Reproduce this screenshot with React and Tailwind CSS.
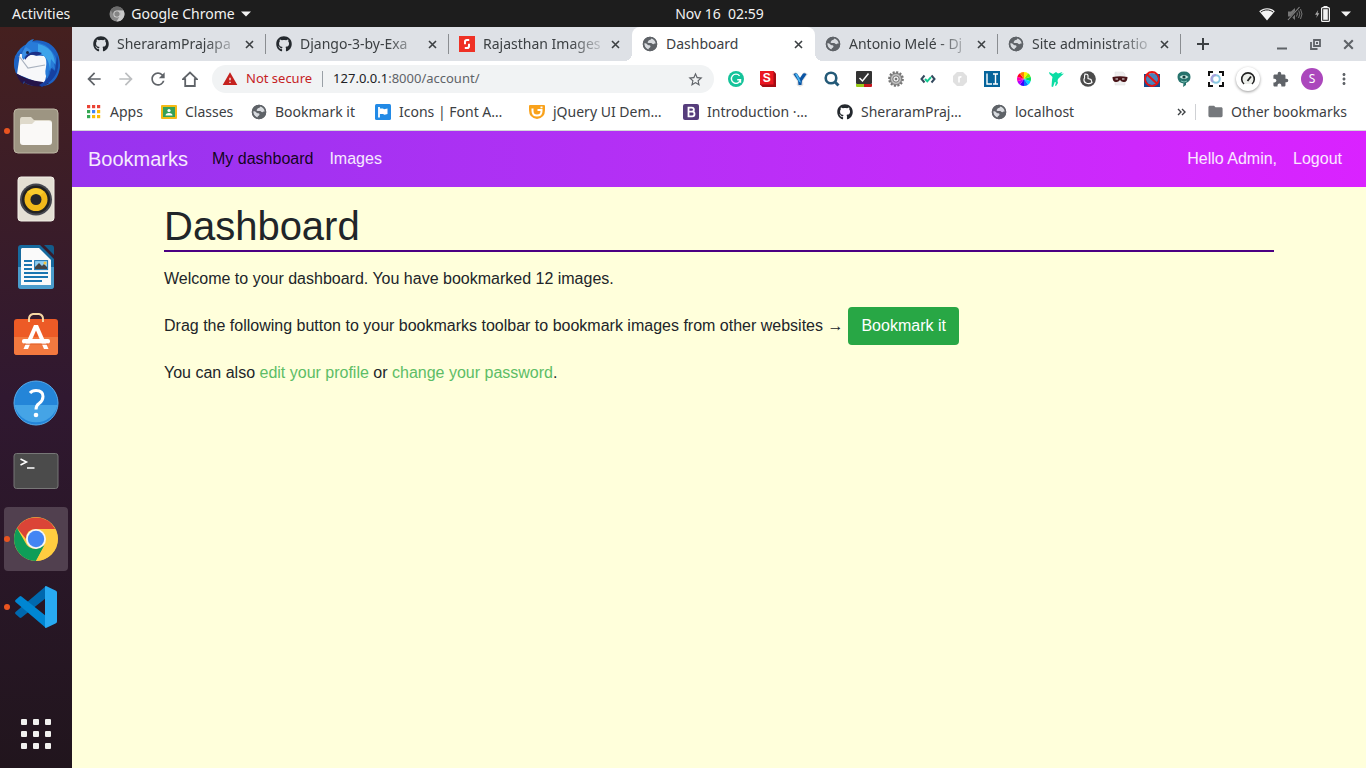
import React from "react";
import { FaGithub } from "react-icons/fa";
import { MdArrowBack, MdArrowForward, MdRefresh, MdStarBorder, MdExtension, MdMoreVert, MdFolder, MdWarning } from "react-icons/md";

const ui = "font-['Noto_Sans',sans-serif]";

function Svg({ s = 16, vb = "0 0 16 16", children, className = "" }) {
  return (
    <svg width={s} height={s} viewBox={vb} className={"shrink-0 " + className} aria-hidden="true">
      {children}
    </svg>
  );
}

const Github = () => <FaGithub size={16} className="shrink-0 text-[#24292e]" aria-hidden="true" />;

const Globe = () => (
  <Svg>
    <circle cx="8" cy="8" r="7.2" fill="#5f6368" />
    <path d="M9.2 1.8c.4 1.2-.4 2-1.6 2.2-1 .2-1 .9-1.6 1.4-.7.6-.5 1.5.6 1.5h2.5c1 0 1.2 1.3 2.3 1.3.6 0 .9-.7 1.7-.7h1.2C14 5 12.200 2.600 9.200 1.800z" fill="#dee1e6" opacity=".95" />
    <path d="M1.900 7.200c.2 3 1.600 5.200 4.700 6.600l.2-1.500c.8-.3 1.700-1 1.700-2 0-.8-.8-1.100-1.700-1.100C5.600 9.200 4.700 7.200 3.300 7.200z" fill="#dee1e6" opacity=".95" />
    <circle cx="8" cy="8" r="6.500" fill="none" stroke="#5f6368" strokeWidth="1.600" />
  </Svg>
);

const Shutter = () => (
  <Svg>
    <rect width="16" height="16" fill="#ef3125" />
    <path d="M5 8.200V5.800A2.800 2.800 0 0 1 7.800 3h2.400v2H8a1 1 0 0 0-1 1v2.200zM11 7.800v2.400A2.800 2.800 0 0 1 8.200 13H5.800v-2H8a1 1 0 0 0 1-1V7.800z" fill="#fff" />
  </Svg>
);

const Cross = ({ s = 9, w = 1.6, color = "#3c4043" }) => (
  <Svg s={s} vb="0 0 9 9">
    <path d="M1 1l7 7M8 1l-7 7" stroke={color} strokeWidth={w} />
  </Svg>
);

const Caret = ({ className = "" }) => (
  <svg width="10" height="6" viewBox="0 0 10 6" className={"shrink-0 " + className} aria-hidden="true">
    <path d="M0 .5h10L5 5.500z" fill="#f2f2f2" />
  </svg>
);

function TopBar() {
  return (
    <header className={"flex h-[27px] shrink-0 items-center justify-between bg-[#1d1d1d] px-3 text-sm text-[#f2f2f2] " + ui}>
      <div className="flex flex-1 items-center gap-[39px]">
        <button type="button">Activities</button>
        <button type="button" className="flex items-center gap-[6px] whitespace-nowrap">
          <Svg s={16}>
            <circle cx="8" cy="8" r="7.500" fill="#8a8a8a" />
            <path d="M1.600 4A7.500 7.500 0 0 1 14.500 4.400H8A3.600 3.600 0 0 0 4.800 9.600z" fill="#6b6b6b" />
            <path d="M14.500 4.400A7.500 7.500 0 0 1 7.500 15.500l3.700-5.900A3.600 3.600 0 0 0 8 4.400z" fill="#c9c9c9" />
            <circle cx="8" cy="8" r="3.600" fill="#d8d8d8" />
            <circle cx="8" cy="8" r="2.700" fill="#858585" />
          </Svg>
          Google Chrome
          <Caret />
        </button>
      </div>
      <time className="ml-[76px] whitespace-pre">Nov 16  02:59</time>
      <div className="flex flex-1 items-center justify-end gap-3 pr-[3px]">
        <Svg s={16}>
          <path d="M8 14.500L.2 5.200C4.700 1.200 11.300 1.200 15.800 5.200z" fill="#f2f2f2" />
          <path d="M1.800 6.100C5.500 3.200 10.500 3.200 14.200 6.100" fill="none" stroke="#1d1d1d" strokeWidth="1" />
        </Svg>
        <Svg s={16}>
          <path d="M1 5.500h3L8 2v12l-4-3.500H1z" fill="#777" />
          <path d="M9.500 5.500q1.800 2.500 0 5M11.500 4q2.800 4 0 8M13.500 3q3 5 0 10" fill="none" stroke="#777" />
          <path d="M1.500 14.500L13 1" stroke="#1d1d1d" strokeWidth="2.200" />
          <path d="M1 14L12.500 1" stroke="#888" strokeWidth="1.100" />
        </Svg>
        <Svg s={16}>
          <path d="M3.200 4L0 8.800h2L1.300 12l3-4.700H2.500z" fill="#aaa" />
          <path d="M8.500 0h4v1.500h-4z" fill="#f2f2f2" />
          <rect x="6.600" y="1.600" width="7.800" height="13.800" rx="1" fill="none" stroke="#f2f2f2" strokeWidth="1.200" />
          <rect x="8.200" y="3.200" width="4.600" height="10.600" fill="#f2f2f2" />
        </Svg>
        <Caret className="-ml-[2px]" />
      </div>
    </header>
  );
}

const dockApps = [
  {
    name: "Thunderbird",
    art: (
      <>
        <circle cx="24" cy="25" r="22" fill="#1f6fd0" />
        <path d="M3 17C1 27 4 38 12 45c0-3 0-5 1-7l24 6c-3 2-6 3-9 3C41 48 48 37 48 26 48 14 42 6 34 3 28 1 21 0 18 4c-4 1-7 4-8 8z" fill="#1d62c4" />
        <path d="M8 15l24 2q6 1 5 8l-5 21L5 35z" fill="#f7f8fa" />
        <path d="M7 17l9 12 17-3" fill="none" stroke="#a9b2bf" strokeWidth="1.200" />
        <path d="M4 34q10 7 27 9l1 4q-9 2-19-3l-1-2-1 3q-5-4-7-11z" fill="#251449" />
        <path d="M13 7q3-6 9-7l-2 3q14 0 21 11 5 7 4 13l-3-3 1 7-3-3v7l-3-4-1 10q-4-5-2-13Q36 15 26 14q-8 0-15 7 0-9 2-14z" fill="#287bd8" />
        <path d="M26 5q16 3 17 20l-4-5-1 11q-1-14-12-17z" fill="#3da4ea" />
        <path d="M45 16q6 21-15 32l-3-2q11-5 12-17l4 3z" fill="#1640a0" />
        <path d="M10 20q-1-8 4-12l6 4q-5 2-10 8z" fill="#3a8ee4" />
        <path d="M16 15q6-4 14-1-4 4-8 2-5-1-9 5-1-3 3-6z" fill="#1b2f86" />
        <circle cx="15.500" cy="13.500" r="1.500" fill="#14254a" />
      </>
    ),
  },
  {
    name: "Files",
    dot: true,
    art: (
      <>
        <rect x="2" y="2" width="44" height="44" rx="4" fill="#9d9582" stroke="#bdb6a4" />
        <path d="M8 13q0-3 2-3h9l3 3h15q3 0 3 3v5H8z" fill="#dfdacb" />
        <path d="M8 19q0-2 2-2h10l3-3h14q3 0 3 3v18q0 3-3 3H11q-3 0-3-3z" fill="#faf9f7" />
      </>
    ),
  },
  {
    name: "Rhythmbox",
    art: (
      <>
        <rect x="6" y="2" width="36" height="44" rx="3" fill="#e4dfd4" stroke="#f2efe7" />
        <circle cx="24" cy="24.500" r="16" fill="#45464e" />
        <circle cx="24" cy="24.500" r="14" fill="#222" />
        <circle cx="24" cy="24.500" r="11.500" fill="#f2b91a" />
        <path d="M15 17a12 12 0 0 1 17 0l-8 7z" fill="#ffd83a" opacity=".6" />
        <circle cx="24" cy="24.500" r="5.500" fill="#26272b" />
      </>
    ),
  },
  {
    name: "LibreOffice Writer",
    art: (
      <>
        <path d="M9 2h19l14 14v27q0 3-3 3H9q-3 0-3-3V5q0-3 3-3z" fill="#176a9e" />
        <path d="M6 24h36v19q0 3-3 3H9q-3 0-3-3z" fill="#4a9ccc" />
        <path d="M10 5h17l12 12v25H9V6z" fill="#fafafa" />
        <path d="M32 2h7q3 0 3 3v7z" fill="#135c8b" />
        <path d="M12 18h8M12 22h8M12 26h8M12 30h24M12 34h24M12 38h18" stroke="#1b76b1" strokeWidth="1.800" />
        <rect x="22.600" y="17.600" width="13" height="9" fill="#8fcef0" stroke="#1b76b1" />
        <path d="M23 26v-2l4-4 3 3 2-2 3 3v2z" fill="#444" />
        <circle cx="33" cy="20" r="1.500" fill="#f4c542" />
      </>
    ),
  },
  {
    name: "Ubuntu Software",
    art: (
      <>
        <rect x="2" y="8" width="44" height="36" rx="3" fill="#ed5b26" />
        <path d="M2 26h44v15q0 3-3 3H5q-3 0-3-3z" fill="#f3793f" />
        <path d="M17 11V8q0-4 4-5h6q4 1 4 5v3" fill="none" stroke="#f7d7a3" strokeWidth="2" />
        <path d="M22 14h4l10.500 24H32l-8-18.500L16 38h-4.500z" fill="#fff" />
        <rect x="10" y="28" width="28" height="4.500" rx="2" fill="#fff" />
        <path d="M12 33.200h24" stroke="#e2662f" strokeWidth="1" />
      </>
    ),
  },
  {
    name: "Help",
    art: (
      <>
        <circle cx="24" cy="24" r="22" fill="#2485d8" stroke="#57acec" />
        <path d="M2.500 26h43A22 22 0 0 1 2.500 26z" fill="#45a4e6" />
        <path d="M18 14q2-2.500 6-2.500 7 0 7 6 0 4-4 7-3 2-3 6" fill="none" stroke="#fff" strokeWidth="3" />
        <circle cx="24" cy="36" r="2.300" fill="#fff" />
      </>
    ),
  },
  {
    name: "Terminal",
    art: (
      <>
        <rect x="2" y="6.500" width="44" height="35" rx="2.500" fill="#4b4b4b" stroke="#777" />
        <path d="M8.500 12l6 3-6 3" fill="none" stroke="#fff" strokeWidth="1.500" />
        <path d="M15 21h7.500" stroke="#fff" strokeWidth="1.500" />
      </>
    ),
  },
  {
    name: "Google Chrome",
    dot: true,
    active: true,
    art: (
      <>
        <circle cx="24" cy="24" r="22" fill="#ffcd40" />
        <path d="M5 13A22 22 0 0 1 43.200 14H24q-10 0-10 10z" fill="#db4437" />
        <path d="M5 13A22 22 0 0 0 24 46l9-16-9 4Q16 34 13 27z" fill="#0f9d58" />
        <path d="M43.200 14A22 22 0 0 1 24 46l9-17q3-10-9-15z" fill="#ffcd40" />
        <circle cx="24" cy="24" r="10" fill="#f5f5f5" />
        <circle cx="24" cy="24" r="8.200" fill="#4285f4" />
      </>
    ),
  },
  {
    name: "Visual Studio Code",
    dot: true,
    art: (
      <>
        <path d="M34 3v12L9.500 34.500q-1 .8-2 0L3.500 31q-1-1 0-2z" fill="#0068ae" />
        <path d="M34 45V33L9.500 13.500q-1-.8-2 0L3.500 17q-1 1 0 2z" fill="#0086d2" />
        <path d="M34 3l9.500 4.500q1.500.7 1.500 2v29q0 1.300-1.500 2L34 45q-1 0-1-1V4q0-1 1-1z" fill="#28aaf2" />
      </>
    ),
  },
];

function Dock() {
  return (
    <nav aria-label="Dock" className="flex w-[72px] shrink-0 flex-col items-center gap-1 bg-linear-to-b from-[#45201f] via-[#301830] to-[#21151d] pt-1 pb-2">
      {dockApps.map((a) => (
        <button
          key={a.name}
          type="button"
          aria-label={a.name}
          className={"relative flex size-16 items-center justify-center rounded-sm " + (a.active ? "bg-[#51404f]" : "")}
        >
          {a.dot && <span className="absolute left-0 size-[6px] rounded-full bg-[#e95420]" />}
          <Svg s={48} vb="0 0 48 48">{a.art}</Svg>
        </button>
      ))}
      <button type="button" aria-label="Show applications" className="mt-auto mb-[3px] grid grid-cols-3 gap-[6px] p-2">
        {[0, 1, 2, 3, 4, 5, 6, 7, 8].map((i) => (
          <span key={i} className="size-[6px] rounded-[1px] bg-[#f2f1ef]" />
        ))}
      </button>
    </nav>
  );
}

const tabs = [
  { title: "SheraramPrajapa", icon: <Github />, line: true },
  { title: "Django-3-by-Exa", icon: <Github />, line: true },
  { title: "Rajasthan Images", icon: <Shutter /> },
  { title: "Dashboard", icon: <Globe />, active: true },
  { title: "Antonio Melé - Dj", icon: <Globe />, line: true },
  { title: "Site administratio", icon: <Globe />, line: true },
];

const activeTab =
  "rounded-t-lg bg-white before:absolute before:bottom-0 before:-left-2 before:size-2 before:bg-[radial-gradient(circle_at_0_0,transparent_8px,white_8px)] after:absolute after:-right-2 after:bottom-0 after:size-2 after:bg-[radial-gradient(circle_at_100%_0,transparent_8px,white_8px)]";

function TabStrip() {
  return (
    <div className="flex h-[34px] items-center bg-[#dee1e6] pl-[11px] text-sm text-[#3c4043]">
      <div role="tablist" className="flex h-full min-w-0">
        {tabs.map((t) => (
          <div
            key={t.title}
            className={"relative flex h-full w-[183px] min-w-0 items-center pl-[10px] " + (t.active ? activeTab : "")}
          >
            <button type="button" role="tab" aria-selected={!!t.active} className="flex min-w-0 flex-1 items-center gap-2">
              {t.icon}
              <span className={"min-w-0 flex-1 overflow-hidden text-left whitespace-nowrap " + (t.active ? "" : "mask-r-from-70% mask-r-to-100%")}>
                {t.title}
              </span>
            </button>
            <button type="button" aria-label="Close tab" className="ml-[3px] flex w-[9px] justify-center">
              <Cross />
            </button>
            <span className={"ml-[11px] h-5 w-px " + (t.line ? "bg-[#8a8d91]" : "")} />
          </div>
        ))}
      </div>
      <button type="button" aria-label="New tab" className="ml-4">
        <Svg s={12} vb="0 0 12 12">
          <path d="M6 0v12M0 6h12" stroke="#3c4043" strokeWidth="2" />
        </Svg>
      </button>
      <div className="mr-3 ml-auto flex items-center gap-[22px]">
        <button type="button" aria-label="Minimize">
          <Svg s={11} vb="0 0 11 11"><path d="M0 9.500h10" stroke="#5f6368" strokeWidth="2" /></Svg>
        </button>
        <button type="button" aria-label="Restore">
          <Svg s={11} vb="0 0 11 11">
            <path d="M4 1h6v6H4zM1 3v7h6.500" fill="none" stroke="#5f6368" strokeWidth="1.800" />
            <path d="M6 3h2v2H6z" fill="#5f6368" />
          </Svg>
        </button>
        <button type="button" aria-label="Close window"><Cross s={11} w={1.700} color="#5f6368" /></button>
      </div>
    </div>
  );
}

const extensions = [
  ["Grammarly", <><circle cx="8" cy="8" r="8" fill="#15c39a" /><path d="M11.600 4.900A4.600 4.600 0 1 0 12.500 8.700H9.200M12.500 8.700v3" fill="none" stroke="#fff" strokeWidth="1.400" /></>],
  ["S", <><path d="M0 0h13.500l2.500 2.500V16H2.500L0 13.500z" fill="#a50c14" /><rect width="13.500" height="13.500" fill="#ea1620" /><text x="6.800" y="11" textAnchor="middle" fontFamily="Liberation Sans" fontWeight="700" fontSize="12" fill="#fff">S</text></>],
  ["Y", <><path d="M.5 3L4 1.500 8 7l4-5.500L15.500 3 10.500 10l.5 4-3 1.500L5 14l.500-4z" fill="#e5e5e5" stroke="#ccc" strokeWidth=".4" /><path d="M1.500 3.200Q3 1.500 5 2.500L8 7l3-4.500q2-1 3.500.7L10 9.800 9.500 14H6.500L6 9.800z" fill="#0b55a5" /><path d="M3 3l2-.3 3 6 1 3-2-1z" fill="#4bb5ee" /></>],
  ["Search", <><circle cx="7" cy="7" r="5.300" fill="none" stroke="#245a78" strokeWidth="2.600" /><path d="M10.500 10.500l4 4" stroke="#245a78" strokeWidth="3" /></>],
  ["Check", <><rect width="16" height="13" rx="1" fill="#333" /><path d="M0 13h8v3H1q-1 0-1-1z" fill="#9acb19" /><path d="M8 13h8v2q0 1-1 1H8z" fill="#c7161d" /><path d="M3.500 7L6.500 10 12.500 2.500" fill="none" stroke="#fff" strokeWidth="1.500" /></>],
  ["Settings helper", <><circle cx="8" cy="8" r="6.600" fill="#aaa" stroke="#747474" strokeWidth="2.500" strokeDasharray="2 1.450" /><circle cx="8" cy="8" r="5.500" fill="#c4c4c4" stroke="#777" strokeWidth=".8" /><circle cx="8" cy="8" r="3.200" fill="#eee" stroke="#777" /><circle cx="8" cy="8" r="1.300" fill="#777" /></>],
  ["Code check", <><path d="M4.500 4.500L1.500 8l3 3.500M11.500 4.500l3 3.500-3 3.500" fill="none" stroke="#34495e" strokeWidth="2" /><path d="M5 8l2.300 2.300L11 6.200" fill="none" stroke="#12c990" strokeWidth="2" /></>],
  ["Reader", <><path d="M5 1h6l4 4v6l-4 4H5l-4-4V5z" fill="#e0e0e0" /><path d="M7 11.500V5.500M7 7q1-1.500 2.500-1" fill="none" stroke="#fff" strokeWidth="1.600" /></>],
  ["LI", <><rect width="16" height="16" fill="#05649b" /><path d="M3 2.500V13h5M9 3h5M11.500 3v10M9 13h5" fill="none" stroke="#fff" strokeWidth="1.400" /></>],
  ["Colour wheel", <>{["#00e05b", "#00d5ff", "#0876ff", "#3c00ff", "#b500ff", "#ff00b4", "#ff0020", "#ff8200", "#fff200", "#82f000"].map((c, i) => (<path key={c} d="M8 8V1A7 7 0 0 1 12.110 2.340z" fill={c} transform={`rotate(${i * 36 + 72} 8 8)`} />))}</>],
  ["Dancer", <><path d="M1 1l4 2 3-2 2 1.500L14.500 1 13 3l3-.5-4.500 4-1.500 1.500-.5 2 .5 2-2 3-1-.5 1-3-1.200-.5L5 16l-1.500-.5L4 9l.5-3L1.500 3z" fill="#0bdda4" /></>],
  ["Boot", <><circle cx="8" cy="8" r="7.800" fill="#4b4b4b" /><path d="M5 3q3 0 3 1.500v3l3 1 1 3q-3 2-6 .5Q3.500 11 4 8q1-1 .5-3z" fill="none" stroke="#fff" strokeWidth="1.100" /></>],
  ["Mask", <><path d="M3 1h8l2 2v11H3z" fill="#eee" stroke="#ddd" strokeWidth=".5" /><path d="M.5 6Q8 4.500 15.500 6q0 5.500-4 5-2 0-3.500-2-1.500 2-3.500 2-4 .5-4-5z" fill="#481317" /><path d="M3.500 8h2.500M10 8h2.500" stroke="#eee" strokeWidth="1.100" /></>],
  ["Blocked picture", <><rect y="3" width="16" height="13" fill="#174b8f" /><circle cx="8" cy="8" r="6" fill="#4b82bc" /><circle cx="8" cy="8" r="7" fill="none" stroke="#e91414" strokeWidth="1.800" /><path d="M3 3.500l10 9" stroke="#e91414" strokeWidth="2" /></>],
  ["Watcher", <><path d="M8 .5q6.500 0 6.500 5.500 0 4.500-4.500 6v2l-3 2 .5-3.500Q1.500 11.500 1.500 6 1.500.5 8 .5z" fill="#27736d" /><path d="M3.500 6Q8 2 12.500 6 8 10 3.500 6z" fill="#cdeee5" /><circle cx="8" cy="6" r="1.600" fill="#173f3f" /><path d="M5 10q3 2 6 0" fill="none" stroke="#79beb4" /></>],
  ["Capture", <><path d="M1 5V1h4M11 1h4v4M15 11v4h-4M5 15H1v-4" fill="none" stroke="#111" strokeWidth="2" /><circle cx="8" cy="8" r="3.800" fill="none" stroke="#8ac9e2" strokeWidth="2" /><path d="M8 4.200A3.800 3.800 0 0 0 5 11" fill="none" stroke="#a9a1dc" strokeWidth="2" /></>],
];

const round = "flex h-8 w-8 shrink-0 items-center justify-center";

function Toolbar() {
  return (
    <div className="flex h-9 items-center bg-white px-[6px] text-[#5f6368]">
      <button type="button" aria-label="Back" className={round}><MdArrowBack size={20} /></button>
      <button type="button" aria-label="Forward" className={round + " text-[#bcbec0]"}><MdArrowForward size={20} /></button>
      <button type="button" aria-label="Reload" className={round}><MdRefresh size={20} /></button>
      <button type="button" aria-label="Home" className={round}>
        <Svg><path d="M1 8.200L8 1.500l7 6.700h-2.200V15H3.200V8.200z" fill="none" stroke="#5f6368" strokeWidth="1.800" /></Svg>
      </button>
      <div className="mx-[6px] flex h-7 min-w-0 flex-1 items-center rounded-full bg-[#f1f3f4] px-[10px] text-[13px]">
        <button type="button" className="flex items-center gap-2 whitespace-nowrap text-[#c5221f]">
          <MdWarning size={16} />
          Not secure
        </button>
        <span className="mx-[10px] h-4 w-px bg-[#9aa0a6]" />
        <div className="relative flex h-full min-w-0 flex-1 items-center">
          <span aria-hidden="true" className="whitespace-nowrap"><span className="text-[#202124]">127.0.0.1</span>:8000/account/</span>
          <input aria-label="Address" defaultValue="127.0.0.1:8000/account/" className="absolute inset-0 w-full bg-transparent text-transparent outline-none" />
        </div>
        <button type="button" aria-label="Bookmark this page"><MdStarBorder size={17} /></button>
      </div>
      {extensions.map(([name, art]) => (
        <button key={name} type="button" aria-label={name} className={round}><Svg>{art}</Svg></button>
      ))}
      <button type="button" aria-label="Speed" className={round}>
        <span className="flex size-6 items-center justify-center rounded-full bg-white shadow-[0_1px_3px_rgba(0,0,0,0.4)]">
          <Svg><path d="M4 13A6.300 6.300 0 1 1 12 13" fill="#eceeea" stroke="#222" strokeWidth="1.600" /><path d="M7.500 10L11 5.500" stroke="#222" strokeWidth="1.800" /></Svg>
        </span>
      </button>
      <button type="button" aria-label="Extensions" className={round}><MdExtension size={17} /></button>
      <button type="button" aria-label="Profile" className={round}>
        <span className="flex size-[22px] items-center justify-center rounded-full bg-[#ab47bc] text-xs text-white">S</span>
      </button>
      <button type="button" aria-label="Menu" className={round}><MdMoreVert size={18} /></button>
    </div>
  );
}

const Apps = () => (
  <Svg>
    {["#ea4335", "#ea4335", "#ea4335", "#34a853", "#4285f4", "#fbbc05", "#34a853", "#fbbc05", "#fbbc05"].map((c, i) => (
      <rect key={i} x={1 + (i % 3) * 5} y={1 + Math.floor(i / 3) * 5} width="3.200" height="3.200" fill={c} />
    ))}
  </Svg>
);

const bookmarks = [
  { w: "w-[75px]", t: "Apps", i: <Apps /> },
  { w: "w-[90px]", t: "Classes", i: <Svg><rect y="1" width="16" height="14" rx="1" fill="#f5ba15" /><rect x="2" y="3" width="12" height="10" fill="#35a05a" /><circle cx="8" cy="6.500" r="1.600" fill="#fff" /><path d="M4.500 11.500q0-2.500 3.500-2.500t3.500 2.500z" fill="#fff" /></Svg> },
  { w: "w-[124px]", t: "Bookmark it", i: <Globe /> },
  { w: "w-[154px]", t: "Icons | Font A…", i: <Svg><rect width="16" height="16" rx="1.500" fill="#228ae6" /><path d="M4 3v10.500" stroke="#fff" strokeWidth="1.800" /><path d="M4.500 4.500h3.500l1 .8 3.500-.8v5.500l-3 .8-1.500-.8H4.500z" fill="#fff" /></Svg> },
  { w: "w-[154px]", t: "jQuery UI Dem…", i: <Svg><path d="M0 2q0-1 1-1h14q1 0 1 1v4q0 8-8 9-8-1-8-9z" fill="#f9a21b" /><path d="M3.500 4.500v2.500q0 4.500 4.500 4.500t4.500-4.500v-1H8.500" fill="none" stroke="#fff" strokeWidth="2" /><path d="M11.500 2.500h2v1.800h-2z" fill="#fff" /></Svg> },
  { w: "w-[154px]", t: "Introduction ·…", i: <Svg><rect width="16" height="16" rx="2" fill="#563d7c" /><path d="M5.500 3.700h3.200q2.200 0 2.200 2T8.700 7.700H5.500h3.700q2.300 0 2.300 2.300t-2.300 2.300H5.500z" fill="none" stroke="#fff" strokeWidth="1.800" /></Svg> },
  { w: "w-[154px]", t: "SheraramPraj…", i: <Github /> },
  { w: "w-[90px]", t: "localhost", i: <Globe /> },
];

function BookmarkBar() {
  return (
    <nav aria-label="Bookmarks bar" className="flex h-[34px] items-center border-b border-[#d5d7da] bg-white pb-1 pl-[14px] pr-[14px] text-sm text-[#3c4043]">
      {bookmarks.map((b) => (
        <a key={b.t} href="#bookmark" className={"flex shrink-0 items-center gap-2 whitespace-nowrap " + b.w}>
          {b.i}
          {b.t}
        </a>
      ))}
      <div className="ml-auto flex items-center gap-2 whitespace-nowrap">
        <button type="button" aria-label="More bookmarks">
          <Svg s={10} vb="0 0 10 10"><path d="M1 2l3 3-3 3M5 2l3 3-3 3" fill="none" stroke="#3c4043" strokeWidth="1.400" /></Svg>
        </button>
        <span className="mr-[3px] h-4 w-px bg-[#cfd1d4]" />
        <a href="#other" className="flex w-[145px] items-center gap-[7px]">
          <MdFolder size={17} className="text-[#75787c]" aria-hidden="true" />
          Other bookmarks
        </a>
      </div>
    </nav>
  );
}

function Page() {
  return (
    <div className="flex-1 bg-[#ffffdb] font-['Liberation_Sans',sans-serif] text-base text-[#212529]">
      <nav className="flex h-14 items-center bg-linear-to-r from-[#9733ee] to-[#da22ff] px-4 text-white/90">
        <a href="#home" className="mr-6 text-xl">Bookmarks</a>
        <div className="flex flex-1 gap-4">
          <a href="#dashboard" className="text-black/90">My dashboard</a>
          <a href="#images">Images</a>
        </div>
        <div className="flex gap-4 pr-2">
          <span>Hello Admin,</span>
          <a href="#logout">Logout</a>
        </div>
      </nav>
      <main className="mx-auto max-w-[1140px] px-[15px] pt-[15px]">
        <h1 className="mb-[15px] border-b-2 border-[#4b0082] text-[40px] leading-[48px]">Dashboard</h1>
        <div className="flex flex-col gap-4">
          <p>Welcome to your dashboard. You have bookmarked 12 images.</p>
          <p className="flex items-center gap-[5px]">
            Drag the following button to your bookmarks toolbar to bookmark images from other websites →
            <a href="#bookmarklet" className="rounded-sm bg-[#28a745] px-[13px] py-[7px] text-white">Bookmark it</a>
          </p>
          <p>
            You can also <a href="#edit" className="text-[#5dbd66]">edit your profile</a> or{" "}
            <a href="#password" className="text-[#5dbd66]">change your password</a>.
          </p>
        </div>
      </main>
    </div>
  );
}

export default function App() {
  return (
    <div className="flex min-h-screen flex-col">
      <TopBar />
      <div className="flex flex-1">
        <Dock />
        <div className="flex min-w-0 flex-1 flex-col">
          <div className={ui}>
            <TabStrip />
            <Toolbar />
            <BookmarkBar />
          </div>
          <Page />
        </div>
      </div>
    </div>
  );
}
